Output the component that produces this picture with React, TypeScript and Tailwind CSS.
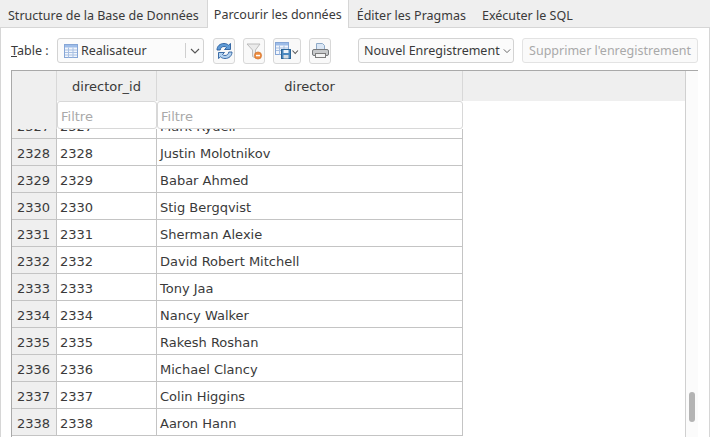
import React from 'react';

// --- Data ---
const rows: [number, string][] = [
  [2327, 'Mark Rydell'],
  [2328, 'Justin Molotnikov'],
  [2329, 'Babar Ahmed'],
  [2330, 'Stig Bergqvist'],
  [2331, 'Sherman Alexie'],
  [2332, 'David Robert Mitchell'],
  [2333, 'Tony Jaa'],
  [2334, 'Nancy Walker'],
  [2335, 'Rakesh Roshan'],
  [2336, 'Michael Clancy'],
  [2337, 'Colin Higgins'],
  [2338, 'Aaron Hann'],
];

const tabs = ['Structure de la Base de Données', 'Parcourir les données', 'Éditer les Pragmas', 'Exécuter le SQL'];

// --- Icons ---
const TableIcon = () => (
  <svg width="16" height="16" viewBox="0 0 16 16" className="shrink-0">
    <rect x="1.5" y="1.5" width="13" height="13" fill="#f2f6fc" stroke="#86a6d6" />
    <rect x="2" y="2" width="12" height="2.5" fill="#9dbce8" />
    <path d="M2 7h12M2 9.500h12M2 12h12M5.500 4.500v10M10 4.500v10" stroke="#a9c0e2" strokeWidth="1" />
  </svg>
);

const RefreshIcon = () => (
  <svg width="17" height="18" viewBox="0 0 17 18">
    <path d="M1 8C1 4 4 1.500 8 1.500c2 0 3.500 .7 4.500 1.700L14.500 1.500v6h-6l2-2c-.7-.7-1.500-1-2.500-1-2 0-3.500 1.300-3.800 3.500z" fill="#5f9bd6" stroke="#2a5f9e" strokeWidth=".9" />
    <path d="M16 10c0 4-3 6.500-7 6.500-2 0-3.500-.7-4.500-1.700L2.500 16.500v-6h6l-2 2c.7 .7 1.500 1 2.500 1 2 0 3.500-1.300 3.800-3.500z" fill="#b3d2f0" stroke="#2a5f9e" strokeWidth=".9" />
  </svg>
);

const FilterClearIcon = () => (
  <svg width="17" height="18" viewBox="0 0 17 18">
    <path d="M1 2h13L9.500 8v8l-3-1.500V8z" fill="#ebebeb" stroke="#b5b5b5" strokeWidth=".9" />
    <circle cx="12" cy="13.500" r="3.600" fill="#ec8b3f" stroke="#cc6a22" strokeWidth=".6" />
    <rect x="10" y="12.800" width="4" height="1.500" fill="#fff" />
  </svg>
);

const SaveTableIcon = () => (
  <svg width="24" height="18" viewBox="0 0 24 18">
    <rect x=".5" y=".5" width="13" height="12" fill="#f2f6fc" stroke="#86a6d6" />
    <rect x="1" y="1" width="12" height="2.500" fill="#9dbce8" />
    <path d="M1 6h12M1 8.500h12M4.500 3.500v9M9 3.500v9" stroke="#a9c0e2" />
    <rect x="6.500" y="7.500" width="9" height="9" fill="#4a88bf" stroke="#2c6596" />
    <rect x="8.500" y="8" width="5" height="3" fill="#eef4fa" />
    <rect x="8.500" y="13" width="5" height="3.500" fill="#d5dde4" />
    <path d="M17.500 8.500l2.700 3 2.700-3" fill="none" stroke="#555" strokeWidth="1.100" />
  </svg>
);

const PrintIcon = () => (
  <svg width="17" height="17" viewBox="0 0 17 17">
    <path d="M4.500 1.500h6l2 2v6h-8z" fill="#dbe7f5" stroke="#8eaac8" />
    <rect x=".5" y="7.500" width="16" height="6" rx="1.500" fill="#c8cacc" stroke="#75787b" />
    <rect x="3.500" y="11.500" width="10" height="4" fill="#f4f4f4" stroke="#7d7d7d" />
  </svg>
);

const Chevron = ({ className = '' }: { className?: string }) => (
  <svg width="10" height="6" viewBox="0 0 10 6" className={className}>
    <path d="M1 1l4 4 4-4" fill="none" stroke="#555" strokeWidth="1.100" />
  </svg>
);

const ToolButton = ({ children, width = 'w-[22px]' }: { children: React.ReactNode; width?: string }) => (
  <div className={`${width} h-[26px] flex items-center justify-center rounded-[3px] border border-[#d8d8d8] bg-[#f9f9f9] overflow-hidden`}>
    {children}
  </div>
);

export default function App() {
  return (
    <div className="w-[710px] h-[437px] overflow-hidden bg-white flex flex-col text-[12.5px] text-[#3a3a3a] font-['Noto_Sans',sans-serif]">

      {/* TAB BAR */}
      <div className="h-[28px] shrink-0 flex bg-[#efefef] border-b border-[#d6d6d6]">
        {tabs.map((t, i) => (
          <div
            key={t}
            className={i === 1
              ? 'h-[28px] px-[6px] flex items-center bg-white border-x border-[#d6d6d6] pt-[2px]'
              : 'h-[27px] px-[8px] flex items-center pt-[5px]'}
          >
            {t}
          </div>
        ))}
      </div>

      {/* PANE */}
      <div className="flex-1 min-h-0 flex flex-col border-x border-[#d6d6d6] pl-[10px] pr-[11px]">

        {/* TOOLBAR */}
        <div className="h-[42px] shrink-0 flex items-center pt-[3px]">
          <span className="w-[46px] shrink-0 pt-[2px]"><span className="underline">T</span>able :</span>
          <div className="w-[147px] h-[25px] shrink-0 flex items-center rounded-[3px] border border-[#d3d3d3] bg-[#fbfbfb] pl-[5px]">
            <TableIcon />
            <span className="ml-[2px] flex-1 pt-[2px]">Realisateur</span>
            <div className="h-[15px] w-[18px] border-l border-[#cfcfcf] flex items-center justify-center"><Chevron /></div>
          </div>
          <div className="ml-[9px] shrink-0 flex items-center gap-[8px]">
            <ToolButton><RefreshIcon /></ToolButton>
            <ToolButton><FilterClearIcon /></ToolButton>
            <ToolButton width="w-[28px]"><SaveTableIcon /></ToolButton>
            <ToolButton><PrintIcon /></ToolButton>
          </div>
          <div className="w-[156px] h-[25px] ml-[27px] shrink-0 flex items-center rounded-[3px] border border-[#d3d3d3] bg-[#fbfbfb] pl-[5px] whitespace-nowrap">
            <span className="flex-1 pt-[2px]">Nouvel Enregistrement</span>
            <Chevron className="mr-[2px] w-[8px]" />
          </div>
          <div className="w-[176px] h-[25px] ml-[8px] shrink-0 flex items-center justify-center rounded-[3px] border border-[#e3e3e3] bg-[#fafafa] text-[#a9a9a9] whitespace-nowrap pt-[2px]">
            Supprimer l'enregistrement
          </div>
        </div>

        {/* TABLE VIEW */}
        <div className="flex-1 min-h-0 flex flex-col border-t border-[#a9a9a9] border-l border-l-[#a9a9a9] text-[13px] font-['DejaVu_Sans',sans-serif]">

          {/* Header */}
          <div className="h-[30px] shrink-0 flex bg-[#efefef]">
            <div className="w-[45px] border-r border-[#d8d8d8]" />
            <div className="w-[100px] border-r border-[#d8d8d8] flex items-center justify-center pt-[1px]">director_id</div>
            <div className="w-[306px] border-r border-[#d8d8d8] flex items-center justify-center pt-[1px]">director</div>
            <div className="w-[222px]" />
            <div className="flex-1 bg-[#fbfbfb] border-l border-[#d0d0d0]" />
          </div>

          {/* Filters */}
          <div className="h-[28px] shrink-0 flex items-stretch">
            <div className="w-[45px] bg-[#efefef] border-r border-[#d8d8d8]" />
            <div className="w-[100px] bg-white rounded-[3px] border border-[#d8d8d8] flex items-center pl-[3px] pt-[3px] text-[#a9a9a9]">Filtre</div>
            <div className="w-[306px] bg-white rounded-[3px] border border-[#d8d8d8] flex items-center pl-[3px] pt-[3px] text-[#a9a9a9]">Filtre</div>
            <div className="w-[222px]" />
            <div className="flex-1 bg-[#fbfbfb] border-l border-[#d0d0d0]" />
          </div>

          {/* Rows, scrolled */}
          <div className="flex-1 min-h-0 flex relative overflow-hidden">
            <div className="w-[451px] shrink-0 -mt-[17px]">
              {rows.map(([id, name]) => (
                <div key={id} className="h-[27px] flex border-b border-[#c4c4c4]">
                  <div className="w-[45px] bg-[#efefef] border-r border-[#c4c4c4] pl-[5px] pt-[3px] flex items-center">{id}</div>
                  <div className="w-[100px] border-r border-[#c4c4c4] pl-[3px] pt-[3px] flex items-center">{id}</div>
                  <div className="w-[306px] border-r border-[#c4c4c4] pl-[3px] pt-[3px] flex items-center">{name}</div>
                </div>
              ))}
            </div>
            <div className="w-[222px] shrink-0" />

            {/* Scrollbar */}
            <div className="flex-1 bg-[#fbfbfb] border-l border-[#d0d0d0] relative">
              <div className="absolute left-[3px] top-[263px] w-[6px] h-[30px] rounded-full bg-[#b4b4b4]" />
            </div>
          </div>
        </div>
      </div>
    </div>
  );
}
